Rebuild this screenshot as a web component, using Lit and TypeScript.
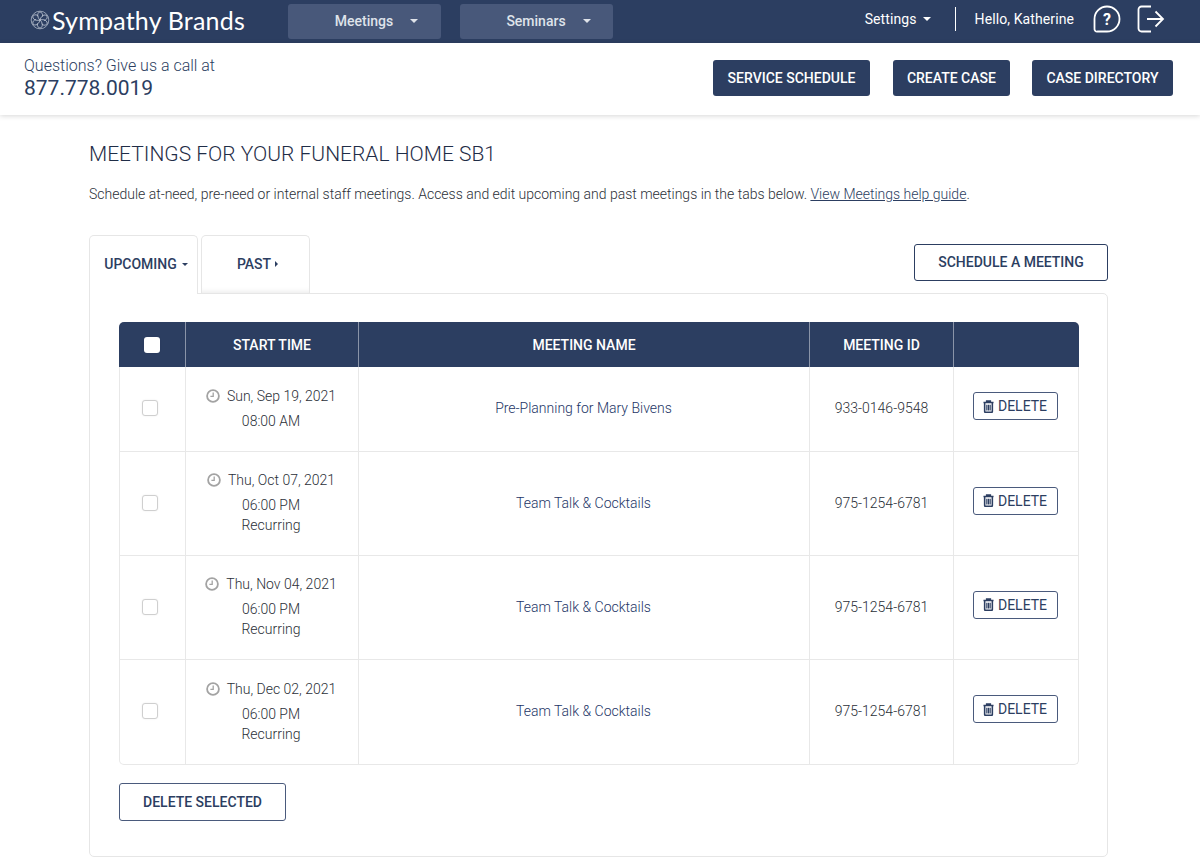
import { LitElement, html, css, svg } from "lit";
import { customElement } from "lit/decorators.js";

const rows = [
  { date: "Sun, Sep 19, 2021", time: "08:00 AM", rec: false, name: "Pre-Planning for Mary Bivens", id: "933-0146-9548" },
  { date: "Thu, Oct 07, 2021", time: "06:00 PM", rec: true, name: "Team Talk & Cocktails", id: "975-1254-6781" },
  { date: "Thu, Nov 04, 2021", time: "06:00 PM", rec: true, name: "Team Talk & Cocktails", id: "975-1254-6781" },
  { date: "Thu, Dec 02, 2021", time: "06:00 PM", rec: true, name: "Team Talk & Cocktails", id: "975-1254-6781" },
];

const clock = html`<svg class="clock" viewBox="0 0 14 14" width="14" height="14"><circle cx="7" cy="7" r="5.9" fill="none" stroke="#a3a3a3" stroke-width="1.8"/><path d="M7.2 3.6V7.4H4.4" fill="none" stroke="#a3a3a3" stroke-width="1.3"/></svg>`;
const trash = html`<svg class="trash" viewBox="0 0 12 14" width="11" height="13"><path d="M.5 2.6h11M4 2.4V1h4v1.4M1.8 3v9.4c0 .6.4 1 1 1h6.4c.6 0 1-.4 1-1V3" fill="none" stroke="#2c3e61" stroke-width="1.7"/><path d="M4.2 5v6.4M6 5v6.4M7.8 5v6.4" stroke="#2c3e61" stroke-width="1.3"/></svg>`;
const petals = [0, 60, 120, 180, 240, 300].map(
  (a) => svg`<path transform="rotate(${a} 12 12)" d="M12 12C9 9 8 5 11 2.5C14 2 16 5 15 8" fill="none" stroke="#c9d0dc" stroke-width=".9"/>`
);

@customElement("app-root")
export class AppRoot extends LitElement {
  static styles = css`
    :host { display: block; width: 1200px; height: 867px; overflow: hidden; background: #fff; color: #2c3e61; font-family: Roboto, "Liberation Sans", sans-serif; font-size: 14px; }
    * { box-sizing: border-box; }
    .nav { height: 43px; background: #2c3e61; display: flex; align-items: center; color: #fff; }
    .logo { display: flex; align-items: center; width: 288px; padding-left: 30px; margin-top: -3px; }
    .logo svg { flex: none; }
    .logo span { font-family: Lato, sans-serif; font-size: 25px; margin-left: 2px; line-height: 40px; letter-spacing: .2px; color: #fff; white-space: nowrap; }
    .menu { width: 153px; height: 35px; margin-right: 19px; background: #48587a; border-radius: 3px; display: flex; align-items: center; justify-content: center; padding: 0 0 2px 24px; font-size: 14px; font-weight: 500; color: #dfe3ea; gap: 17px; }
    .caret { width: 0; height: 0; border-left: 4px solid transparent; border-right: 4px solid transparent; border-top: 4px solid currentColor; display: inline-block; }
    .right { margin-left: auto; display: flex; align-items: center; height: 100%; margin-top: -5px; }
    .settings { display: flex; align-items: center; gap: 6px; font-size: 14px; letter-spacing: .1px; }
    .sep { width: 1px; height: 24px; background: #fff; margin: 0 19px 0 24px; }
    .hello { font-size: 14px; letter-spacing: .1px; margin-right: 19px; }
    .icon { display: block; }
    .exit { margin: 0 35px 0 16px; }
    .sub { height: 72px; display: flex; align-items: center; padding: 0 27px 0 24px; box-shadow: 0 1px 5px rgba(0,0,0,.16); position: relative; }
    .call { font-size: 16px; font-weight: 300; line-height: 20px; margin-top: -2px; }
    .phone { font-size: 21px; font-weight: 400; line-height: 26px; margin-top: -1px; }
    .actions { margin-left: auto; display: flex; gap: 23px; margin-bottom: 2px; }
    .solid { height: 36px; background: #2c3e61; color: #fff; border-radius: 3px; font-size: 14px; font-weight: 500; display: flex; align-items: center; padding: 0 14.5px; }
    .solid:nth-child(2) { padding: 0 14px; }
    .solid:nth-child(3) { margin-left: -1px; }
    .main { padding: 26px 92px 0 89px; }
    h1 { margin: 0; font-size: 21px; font-weight: 300; line-height: 26px; color: #1f2d47; }
    .intro { margin: 17px 0 0; font-size: 14px; line-height: 20px; color: #2b2f38; font-weight: 300; letter-spacing: -.005px; }
    .intro a { color: #2c3e61; text-decoration: underline; }
    .tabbar { display: flex; align-items: flex-start; margin-top: 31px; height: 59px; position: relative; }
    .tab { width: 109px; height: 59px; border: 1px solid #e6e6e6; border-bottom: none; border-radius: 5px 5px 0 0; display: flex; align-items: center; justify-content: center; gap: 4px; font-size: 14px; font-weight: 500; padding: 0 0 1px 4px; }
    .tab.active { background: #fff; position: relative; z-index: 1; height: 59px; gap: 5px; padding: 0 0 2px 5px; }
    .tab.other { width: 109px; margin-left: 3px; height: 58px; box-shadow: inset 0 -6px 6px -6px rgba(0,0,0,.12); }
    .caret.sm { border-left-width: 3px; border-right-width: 3px; border-top-width: 3px; }
    .caret.r { border-top: 3px solid transparent; border-bottom: 3px solid transparent; border-left: 3px solid currentColor; border-right: none; }
    .outline { background: #fff; border: 1px solid #2c3e61; border-radius: 3px; font-size: 14px; font-weight: 500; color: #2c3e61; display: flex; align-items: center; justify-content: center; }
    .schedule { width: 194px; height: 37px; margin-left: auto; margin-top: 9px; padding-bottom: 2px; }
    .panel { border: 1px solid #e6e6e6; border-radius: 0 5px 5px 5px; height: 564px; margin-top: -1px; padding: 28px 28px 0 29px; }
    .table { display: grid; grid-template-columns: 66px 173px 451px 144px 124px; grid-template-rows: 45px 85px 104px 104px 104px; width: 960px; border: 1px solid #e8e8e8; border-top: none; border-radius: 5px; }
    .th { background: #2c3e61; color: #fff; font-weight: 500; font-size: 14px; display: flex; align-items: center; justify-content: center; border-right: 1px solid #8a94a8; }
    .th:first-child { border-top-left-radius: 5px; margin-left: -1px; }
    .th:nth-child(5) { border-right: none; border-top-right-radius: 5px; margin-right: -1px; }
    .td { display: flex; align-items: center; justify-content: center; border-right: 1px solid #e8e8e8; border-bottom: 1px solid #e8e8e8; font-size: 14px; font-weight: 300; color: #2b2f38; padding-bottom: 2px; }
    .td.last { border-right: none; }
    .td.end { border-bottom: none; }
    .td.name { color: #1d3566; font-weight: 300; padding-right: 1px; }
    .box { width: 16px; height: 16px; border-radius: 3px; border: 1px solid #cfcfcf; background: #fff; box-shadow: 0 0 2px rgba(0,0,0,.08); margin-left: -6px; }
    .box.head { border: none; margin-left: -1px; }
    .start { flex-direction: column; text-align: center; line-height: 20px; padding-right: 2px; }
    .dline { display: flex; align-items: center; gap: 7px; margin-bottom: 5px; white-space: nowrap; }
    .clock { flex: none; }
    .del { width: 85px; height: 28px; gap: 4px; font-weight: 400; font-size: 14px; margin: 0 2px 4px 0; border-color: #4a5a7c; }
    .delsel { width: 167px; height: 38px; margin-top: 18px; border-color: #4a5a7c; }
  `;

  render() {
    return html`
      <div class="nav">
        <div class="logo">
          <svg viewBox="0 0 24 24" width="20" height="20">
            <circle cx="12" cy="12" r="10.6" fill="none" stroke="#c9d0dc" stroke-width=".8"/>${petals}
          </svg>
          <span>Sympathy Brands</span>
        </div>
        <div class="menu">Meetings <i class="caret"></i></div>
        <div class="menu">Seminars <i class="caret"></i></div>
        <div class="right">
          <div class="settings">Settings <i class="caret"></i></div>
          <div class="sep"></div>
          <div class="hello">Hello, Katherine</div>
          <svg class="icon" viewBox="0 0 28 28" width="28" height="28">
            <path d="M14 1.5a12.5 12.5 0 1 1 0 25H4.5a2.6 2.6 0 0 1-3-3V14A12.5 12.5 0 0 1 14 1.5Z" fill="none" stroke="#fff" stroke-width="1.8"/>
            <text x="14" y="20" text-anchor="middle" font-family="Roboto, sans-serif" font-size="16" font-weight="700" fill="#fff">?</text>
          </svg>
          <svg class="icon exit" viewBox="0 0 28 28" width="28" height="28">
            <path d="M14 1.5H4.5a3 3 0 0 0-3 3v19a3 3 0 0 0 3 3H14" fill="none" stroke="#fff" stroke-width="1.8"/>
            <path d="M10 14h16M18.5 6.5 26 14l-7.5 7.5" fill="none" stroke="#fff" stroke-width="1.8"/>
          </svg>
        </div>
      </div>
      <div class="sub">
        <div>
          <div class="call">Questions? Give us a call at</div>
          <div class="phone">877.778.0019</div>
        </div>
        <div class="actions">
          <div class="solid">SERVICE SCHEDULE</div>
          <div class="solid">CREATE CASE</div>
          <div class="solid">CASE DIRECTORY</div>
        </div>
      </div>
      <div class="main">
        <h1>MEETINGS FOR YOUR FUNERAL HOME SB1</h1>
        <p class="intro">Schedule at-need, pre-need or internal staff meetings. Access and edit upcoming and past meetings in the tabs below. <a href="#">View Meetings help guide</a>.</p>
        <div class="tabbar">
          <div class="tab active">UPCOMING <i class="caret sm"></i></div>
          <div class="tab other">PAST <i class="caret r"></i></div>
          <div class="outline schedule">SCHEDULE A MEETING</div>
        </div>
        <div class="panel">
          <div class="table">
            <div class="th"><div class="box head"></div></div>
            <div class="th">START TIME</div>
            <div class="th">MEETING NAME</div>
            <div class="th">MEETING ID</div>
            <div class="th"></div>
            ${rows.map((r, i) => {
              const end = i === rows.length - 1 ? "end" : "";
              return html`
                <div class="td ${end}"><div class="box"></div></div>
                <div class="td start ${end}">
                  <div class="dline">${clock}<span>${r.date}</span></div>
                  <div>${r.time}</div>
                  ${r.rec ? html`<div>Recurring</div>` : ""}
                </div>
                <div class="td name ${end}">${r.name}</div>
                <div class="td ${end}">${r.id}</div>
                <div class="td last ${end}"><div class="outline del">${trash} DELETE</div></div>
              `;
            })}
          </div>
          <div class="outline delsel">DELETE SELECTED</div>
        </div>
      </div>
    `;
  }
}
